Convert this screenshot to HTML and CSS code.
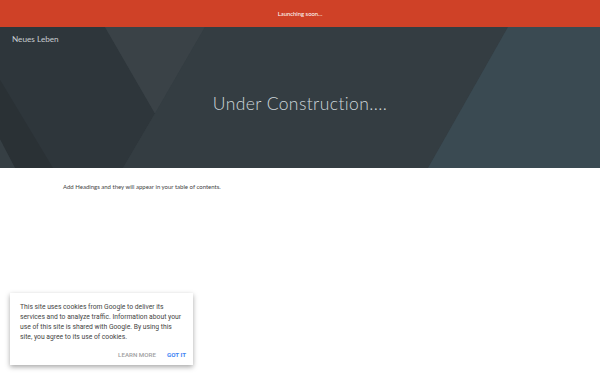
FILE: index.html
```html
<!DOCTYPE html>
<html>
<head>
    <title>Neues Leben</title>
    <meta name="viewport" content="width=device-width, initial-scale=1.0">
    <link rel="stylesheet" href="styles.css">
</head>
<body>
    <div class="notice">Launching soon...</div>

    <header class="hero">
        <svg class="hero-bg" viewBox="0 0 600 142" preserveAspectRatio="none">
            <rect x="0" y="0" width="600" height="142" fill="#353e43"/>
            <polygon points="0,0 105,0 155,87 123,142 0,142" fill="#2e363b"/>
            <polygon points="105,0 205,0 155,87" fill="#3a4247"/>
            <polygon points="0,53 53,142 15,142 0,113" fill="#2a3135"/>
            <polygon points="0,113 15,142 0,142" fill="#363f44"/>
            <polygon points="155,87 205,0 508,0 428,142 123,142" fill="#343d42"/>
            <polygon points="508,0 600,0 600,142 428,142" fill="#3a4a52"/>
        </svg>
        <div class="site-name">Neues Leben</div>
        <h1 class="hero-title">Under Construction....</h1>
    </header>

    <main class="content">
        <p>Add Headings and they will appear in your table of contents.</p>
    </main>

    <div class="cookie-box">
        <p>This site uses cookies from Google to deliver its services and to analyze traffic. Information about your use of this site is shared with Google. By using this site, you agree to its use of cookies.</p>
        <div class="cookie-actions">
            <span class="btn-learn">LEARN MORE</span>
            <span class="btn-got">GOT IT</span>
        </div>
    </div>
</body>
</html>
```

FILE: styles.css
```css
body {
    margin: 0;
    font-family: Lato, "Open Sans", sans-serif;
    background: #fff;
    width: 600px;
    height: 375px;
    overflow: hidden;
    position: relative;
}

.notice {
    background: #cf4127;
    color: #fff;
    font-size: 5.9px;
    height: 27px;
    line-height: 27px;
    text-align: center;
}

.hero {
    position: relative;
    height: 141px;
    background: #353e43;
    overflow: hidden;
}

.hero-bg {
    position: absolute;
    top: 0;
    left: 0;
    width: 100%;
    height: 100%;
}

.site-name {
    position: relative;
    padding: 7px 0 0 12px;
    font-size: 8.2px;
    color: #c8cdd0;
}

.hero-title {
    position: relative;
    margin: 49px 0 0;
    text-align: center;
    font-weight: 300;
    font-size: 17.5px;
    letter-spacing: 0.4px;
    color: #cdd6da;
}

.content {
    padding: 15px 63px;
}

.content p {
    margin: 0;
    font-size: 6px;
    font-weight: 400;
    color: #444;
}

.cookie-box {
    position: absolute;
    left: 10px;
    top: 293px;
    width: 163px;
    padding: 9px 10px 6px;
    background: #fff;
    box-shadow: 0 2px 5px rgba(0, 0, 0, 0.35);
    font-family: Roboto, Arial, sans-serif;
}

.cookie-box p {
    margin: 0;
    font-size: 6.75px;
    line-height: 10px;
    color: #444;
}

.cookie-actions {
    display: flex;
    justify-content: flex-end;
    gap: 11px;
    margin: 9px -3px 0 0;
    font-size: 6.2px;
    font-weight: 500;
}

.btn-learn {
    color: #9e9e9e;
}

.btn-got {
    color: #4285f4;
    font-weight: 700;
}
```
